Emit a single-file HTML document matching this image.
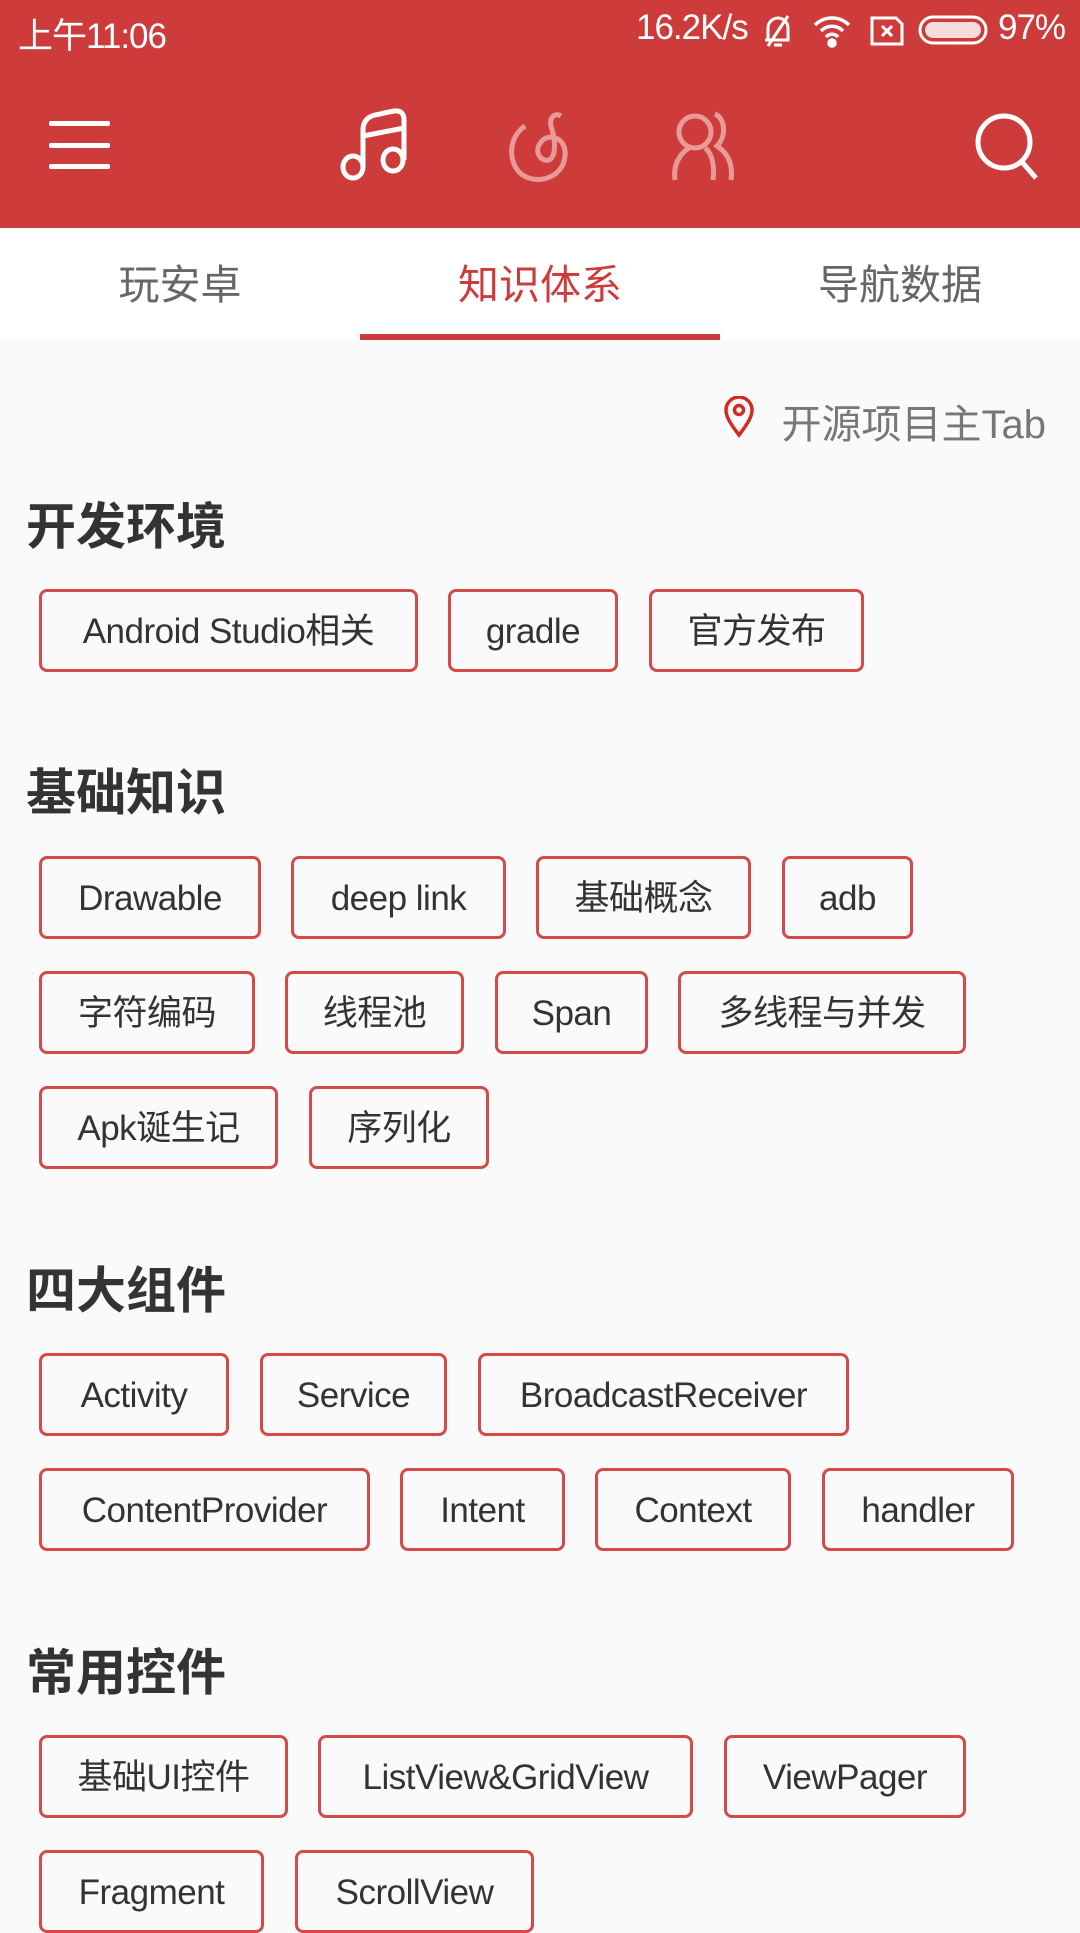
<!DOCTYPE html>
<html><head><meta charset="utf-8"><style>
*{margin:0;padding:0;box-sizing:border-box}
body{width:1080px;height:1920px;overflow:hidden;background:#fafafa;font-family:"Liberation Sans","Noto Sans CJK SC",sans-serif;position:relative}
.top{position:absolute;left:0;top:0;width:1080px;height:228px;background:#cd3c3a}
.sb{position:absolute;top:8px;color:#fff;font-size:35px;letter-spacing:-1px}
.tabs{position:absolute;top:228px;left:0;width:1080px;height:112px;background:#fff}
.tab{position:absolute;top:0;width:360px;height:106px;line-height:114px;text-align:center;font-size:41px;color:#666}
.ind{position:absolute;left:360px;top:334px;width:360px;height:6px;background:#cd3c3a}
.h{position:absolute;left:26px;font-size:50px;font-weight:bold;color:#333;line-height:60px}
.t{position:absolute;height:83px;border:3px solid #d24b48;border-radius:8px;line-height:79px;text-align:center;font-size:35px;color:#333;letter-spacing:-0.5px;white-space:nowrap}
</style></head><body>
<div class="top">
<div class="sb" style="left:18px">上午11:06</div>
<div class="sb" style="left:636px">16.2K/s</div>
<svg style="position:absolute;left:760px;top:12px" width="36" height="38" viewBox="0 0 36 38" fill="none" stroke="#fff" stroke-width="3"><path d="M8 28 L8 16 a10 10 0 0 1 20 0 V28 H5 M14 33 h8 M28 4 L8 34"/></svg>
<svg style="position:absolute;left:812px;top:14px" width="40" height="34" viewBox="0 0 40 34" fill="none" stroke="#fff" stroke-width="3.5"><path d="M3 11 a24 24 0 0 1 34 0 M9 17 a15 15 0 0 1 22 0 M14 23 a8 8 0 0 1 12 0"/><circle cx="20" cy="29" r="3" fill="#fff"/></svg>
<svg style="position:absolute;left:870px;top:14px" width="34" height="32" viewBox="0 0 34 32" fill="none" stroke="#fff" stroke-width="3"><path d="M2 4 h24 l6 6 v20 h-30z M12 12 l10 10 M22 12 l-10 10"/></svg>
<svg style="position:absolute;left:918px;top:14px" width="72" height="32" viewBox="0 0 72 32"><rect x="2" y="3" width="66" height="26" rx="13" fill="none" stroke="#fff" stroke-width="3"/><rect x="7" y="8" width="56" height="16" rx="8" fill="#f6dcdc"/></svg>
<div class="sb" style="left:998px">97%</div>
<div style="position:absolute;left:49px;top:121px;width:61px;height:5px;background:#fff;border-radius:2px"></div>
<div style="position:absolute;left:49px;top:143px;width:61px;height:5px;background:#fff;border-radius:2px"></div>
<div style="position:absolute;left:49px;top:164px;width:61px;height:5px;background:#fff;border-radius:2px"></div>
<svg style="position:absolute;left:338px;top:108px" width="76" height="76" viewBox="0 0 76 76" fill="none" stroke="#fff" stroke-width="5"><ellipse cx="15" cy="59" rx="10" ry="11"/><ellipse cx="55" cy="52" rx="10" ry="11"/><path d="M25 59 V22 Q25 10 37 7 L56 3 Q66 2 66 12 V52 M25 28 L66 20"/></svg>
<svg style="position:absolute;left:505px;top:108px" width="76" height="80" viewBox="0 0 76 80" fill="none" stroke="#e89a98" stroke-width="5"><path d="M20 18 C5 28 2 50 14 64 C28 78 58 72 60 48 C62 30 44 24 36 34 C28 44 36 54 44 52 C52 48 50 30 46 18 C44 10 50 4 56 8"/></svg>
<svg style="position:absolute;left:665px;top:108px" width="80" height="80" viewBox="0 0 80 80" fill="none" stroke="#e89a98" stroke-width="5"><circle cx="30" cy="24" r="16"/><path d="M10 72 C8 58 14 46 24 40 M40 40 C46 44 50 56 48 72 M50 6 C60 10 62 28 52 38 C64 46 68 58 66 72"/></svg>
<svg style="position:absolute;left:972px;top:112px" width="72" height="72" viewBox="0 0 72 72" fill="none" stroke="#fff" stroke-width="5"><circle cx="32" cy="30" r="26"/><path d="M50 50 L64 66"/></svg>
</div>
<div class="tabs">
<div class="tab" style="left:0">玩安卓</div>
<div class="tab" style="left:360px;color:#cd3c3a">知识体系</div>
<div class="tab" style="left:720px">导航数据</div>
</div>
<div class="ind"></div>
<svg style="position:absolute;left:723px;top:396px" width="32" height="42" viewBox="0 0 32 42" fill="none" stroke="#d42a22" stroke-width="3.5"><path d="M16 39 C6 26 3 20 3 14 a13 13 0 0 1 26 0 C29 20 26 26 16 39z"/><circle cx="16" cy="14" r="4.5"/></svg>
<div style="position:absolute;right:34px;top:392px;font-size:40px;color:#777">开源项目主Tab</div>

<div class="h" style="top:497px">开发环境</div>
<div class="t" style="left:39px;top:589px;width:379px">Android Studio相关</div>
<div class="t" style="left:448px;top:589px;width:170px">gradle</div>
<div class="t" style="left:649px;top:589px;width:215px">官方发布</div>

<div class="h" style="top:763px">基础知识</div>
<div class="t" style="left:39px;top:856px;width:222px">Drawable</div>
<div class="t" style="left:291px;top:856px;width:215px">deep link</div>
<div class="t" style="left:536px;top:856px;width:215px">基础概念</div>
<div class="t" style="left:782px;top:856px;width:131px">adb</div>
<div class="t" style="left:39px;top:971px;width:216px">字符编码</div>
<div class="t" style="left:285px;top:971px;width:179px">线程池</div>
<div class="t" style="left:495px;top:971px;width:153px">Span</div>
<div class="t" style="left:678px;top:971px;width:288px">多线程与并发</div>
<div class="t" style="left:39px;top:1086px;width:239px">Apk诞生记</div>
<div class="t" style="left:309px;top:1086px;width:180px">序列化</div>

<div class="h" style="top:1261px">四大组件</div>
<div class="t" style="left:39px;top:1353px;width:190px">Activity</div>
<div class="t" style="left:260px;top:1353px;width:187px">Service</div>
<div class="t" style="left:478px;top:1353px;width:371px">BroadcastReceiver</div>
<div class="t" style="left:39px;top:1468px;width:331px">ContentProvider</div>
<div class="t" style="left:400px;top:1468px;width:165px">Intent</div>
<div class="t" style="left:595px;top:1468px;width:196px">Context</div>
<div class="t" style="left:822px;top:1468px;width:192px">handler</div>

<div class="h" style="top:1643px">常用控件</div>
<div class="t" style="left:39px;top:1735px;width:249px">基础UI控件</div>
<div class="t" style="left:318px;top:1735px;width:375px">ListView&amp;GridView</div>
<div class="t" style="left:724px;top:1735px;width:242px">ViewPager</div>
<div class="t" style="left:39px;top:1850px;width:225px">Fragment</div>
<div class="t" style="left:295px;top:1850px;width:239px">ScrollView</div>
</body></html>
